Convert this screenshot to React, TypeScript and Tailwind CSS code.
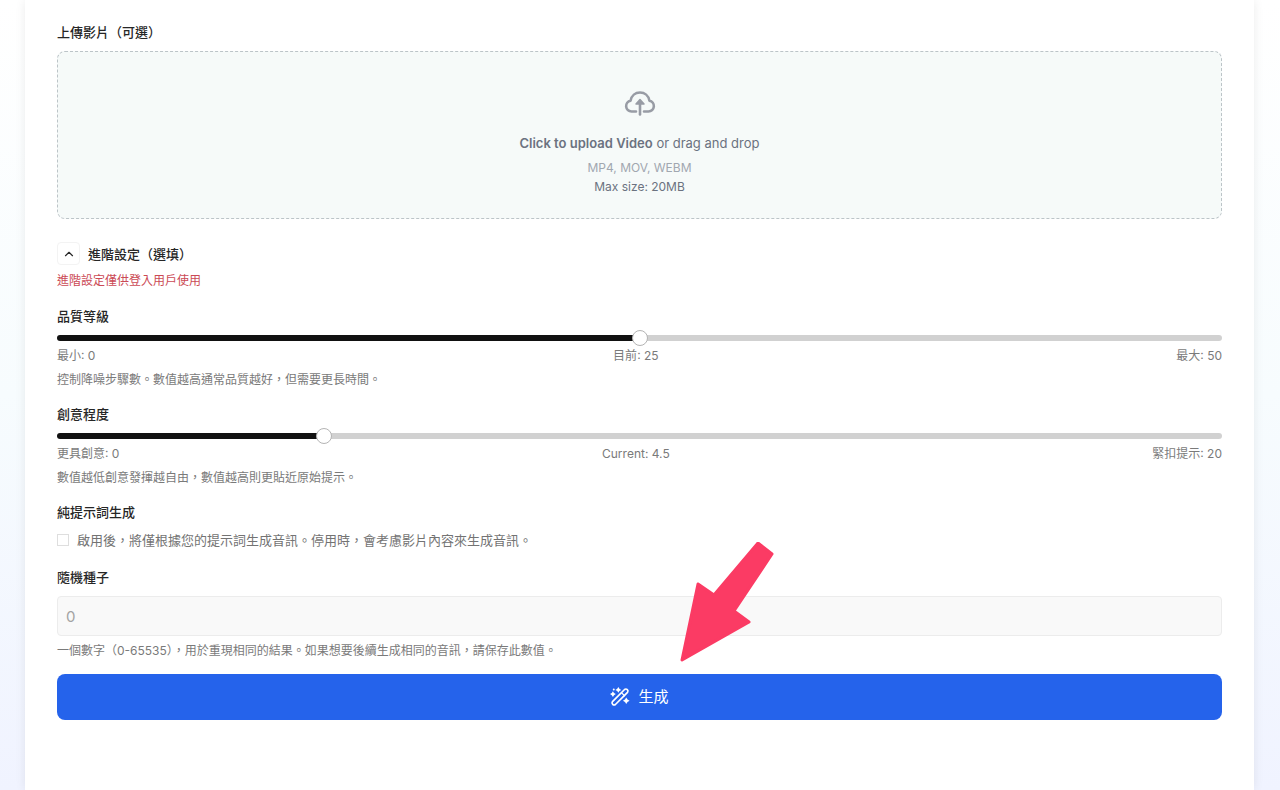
import { useState } from 'react';
import { ChevronUp } from 'lucide-react';

interface SliderFieldProps {
  id: string;
  label: string;
  min: number;
  max: number;
  step: number;
  initial: number;
  minLabel: string;
  currentLabel: string;
  maxLabel: string;
  description: string;
}

function SliderField({ id, label, min, max, step, initial, minLabel, currentLabel, maxLabel, description }: SliderFieldProps) {
  const [value, setValue] = useState(initial);
  const percent = ((value - min) / (max - min)) * 100;

  return (
    <div className="mb-[14px]">
      <label htmlFor={id} className="block text-[13px] leading-5 font-medium text-neutral-800">{label}</label>
      <div className="mt-1 flex h-4 items-center">
        <input
          id={id}
          type="range"
          min={min}
          max={max}
          step={step}
          value={value}
          onChange={(e) => setValue(Number(e.target.value))}
          className="h-[6px] w-full cursor-pointer appearance-none rounded-full [&::-webkit-slider-thumb]:h-4 [&::-webkit-slider-thumb]:w-4 [&::-webkit-slider-thumb]:appearance-none [&::-webkit-slider-thumb]:rounded-full [&::-webkit-slider-thumb]:border [&::-webkit-slider-thumb]:border-[#b4b4b4] [&::-webkit-slider-thumb]:bg-white"
          style={{ background: `linear-gradient(to right, #111111 ${percent}%, #d1d1d1 ${percent}%)` }}
        />
      </div>
      <div className="flex justify-between text-[12px] leading-5 text-[#7a7a7a]">
        <span>{minLabel}: {min}</span>
        <span>{currentLabel}: {value}</span>
        <span>{maxLabel}: {max}</span>
      </div>
      <p className="mt-1 text-[12px] leading-5 text-[#7a7a7a]">{description}</p>
    </div>
  );
}

function CloudUploadIcon() {
  return (
    <svg viewBox="0 0 32 26" className="h-[26px] w-8 text-[#989ca5]" fill="none" stroke="currentColor" strokeWidth="2.6" strokeLinecap="round" strokeLinejoin="round">
      <path d="M12 21.500H7.500a5.500 5.500 0 0 1-.9-10.900C7.500 5.600 11.400 2.500 16 2.500s8.500 3.100 9.400 8.100a5.500 5.500 0 0 1-.9 10.900H20" />
      <path d="M16 13v11.500" />
      <path d="m16 9.500 4 4.500h-8Z" fill="currentColor" strokeWidth="1.500" />
    </svg>
  );
}

function WandIcon() {
  return (
    <svg viewBox="0 0 24 24" className="h-5 w-5" fill="none" stroke="currentColor" strokeWidth="2" strokeLinecap="round" strokeLinejoin="round">
      <path d="M3 17.500 17.500 3a2.500 2.500 0 0 1 3.500 3.500L6.500 21A2.500 2.500 0 0 1 3 17.500Z" />
      <path d="m14 7 3.500 3.500" strokeWidth="1.500" />
      <g fill="currentColor" stroke="none">
        <path d="m3.500 5 1.300 2.200L7 8.500 4.800 9.800 3.500 12 2.200 9.800 0 8.500l2.200-1.300Z" />
        <path d="m10 0 1.300 2.200 2.200 1.300-2.200 1.300L10 7 8.700 4.800 6.500 3.500l2.200-1.300Z" />
        <path d="m19.500 12.500 1.500 2.500 2.500 1.500L21 18l-1.500 2.500L18 18l-2.500-1.500L18 15Z" />
        <circle cx="4.500" cy="3" r="1.200" />
      </g>
    </svg>
  );
}

function ArrowPointer() {
  return (
    <svg viewBox="0 0 94 120" className="pointer-events-none absolute right-[448px] bottom-[58px] h-[120px] w-[94px]" aria-hidden="true">
      <path
        d="M78 1 92 12 54 69 69 80 2 118 18 42 34 53Z"
        fill="#fb3b64"
        stroke="#fb3b64"
        strokeWidth="3"
        strokeLinejoin="round"
      />
    </svg>
  );
}

export default function App() {
  const [open, setOpen] = useState(true);

  return (
    <div className="min-h-screen bg-linear-to-b from-white via-[#f7fcfe] to-[#f0f3ff] pr-[26px] pl-[25px] font-['Inter','Noto_Sans_CJK_TC',sans-serif]">
      <form className="min-h-screen bg-white px-8 pt-[22px] pb-16 shadow-[0_0_10px_rgba(0,0,0,0.08)]" onSubmit={(e) => e.preventDefault()}>
        <label htmlFor="video" className="block text-[13px] leading-5 font-medium text-neutral-800">上傳影片（可選）</label>
        <label
          htmlFor="video"
          className="mt-[9px] mb-[23px] flex h-[168px] cursor-pointer flex-col items-center rounded-lg border border-dashed border-[#bcc4c8] bg-[#f6faf9] pt-[38px] text-[#6b7280]"
        >
          <CloudUploadIcon />
          <span className="mt-[17px] text-[13px] leading-5"><span className="font-semibold">Click to upload Video</span> or drag and drop</span>
          <span className="mt-[5px] text-[12px] leading-[19px] text-[#a1a7b0]">MP4, MOV, WEBM</span>
          <span className="text-[12px] leading-[19px]">Max size: 20MB</span>
          <input id="video" type="file" accept="video/*" className="sr-only" />
        </label>

        <button
          type="button"
          aria-expanded={open}
          onClick={() => setOpen(!open)}
          className="flex items-center gap-2 text-[13px] leading-5 font-medium text-neutral-800"
        >
          <span className="flex h-[23px] w-[23px] items-center justify-center rounded-sm border border-[#f3f3f3]">
            <ChevronUp className={`h-[14px] w-[14px] ${open ? '' : 'rotate-180'}`} />
          </span>
          進階設定（選填）
        </button>
        <p className="mt-[6px] mb-[15px] text-[12px] leading-5 text-[#cb4a55]">進階設定僅供登入用戶使用</p>

        {open && (
          <>
            <SliderField
              id="quality"
              label="品質等級"
              min={0}
              max={50}
              step={1}
              initial={25}
              minLabel="最小"
              currentLabel="目前"
              maxLabel="最大"
              description="控制降噪步驟數。數值越高通常品質越好，但需要更長時間。"
            />
            <SliderField
              id="creativity"
              label="創意程度"
              min={0}
              max={20}
              step={0.5}
              initial={4.5}
              minLabel="更具創意"
              currentLabel="Current"
              maxLabel="緊扣提示"
              description="數值越低創意發揮越自由，數值越高則更貼近原始提示。"
            />
            <fieldset>
              <legend className="text-[13px] leading-5 font-medium text-neutral-800">純提示詞生成</legend>
              <label className="mt-2 flex items-center gap-2 text-[13px] leading-5 text-[#737373]">
                <input type="checkbox" disabled className="h-3 w-3 appearance-none border border-[#dedede] bg-white" />
                啟用後，將僅根據您的提示詞生成音訊。停用時，會考慮影片內容來生成音訊。
              </label>
            </fieldset>
            <label htmlFor="seed" className="mt-[17px] block text-[13px] leading-5 font-medium text-neutral-800">隨機種子</label>
            <input
              id="seed"
              type="text"
              disabled
              placeholder="0"
              className="mt-[9px] block h-10 w-full rounded-sm border border-[#ececec] bg-[#f9f9f9] px-2 text-[15px] placeholder:text-[#a3a3a3]"
            />
            <p className="mt-[5px] text-[12px] leading-5 text-[#7a7a7a]">一個數字（0-65535），用於重現相同的結果。如果想要後續生成相同的音訊，請保存此數值。</p>
          </>
        )}

        <div className="relative mt-[13px]">
          <button type="submit" className="flex h-[46px] w-full items-center justify-center gap-2 rounded-lg bg-[#2563eb] text-[15px] text-white">
            <WandIcon />
            生成
          </button>
          <ArrowPointer />
        </div>
      </form>
    </div>
  );
}
